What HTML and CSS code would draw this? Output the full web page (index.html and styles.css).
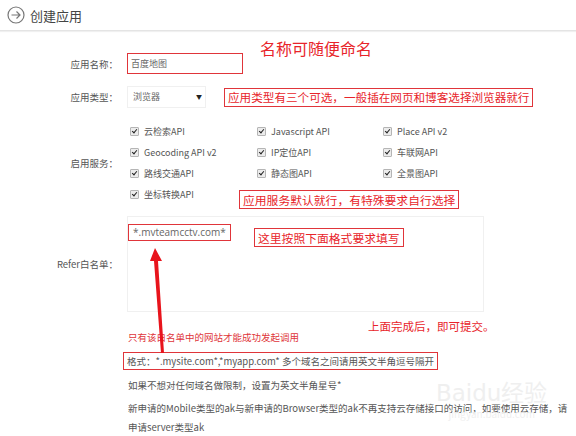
FILE: index.html
```html
<!DOCTYPE html>
<html lang="zh-CN">
<head>
  <meta charset="UTF-8">
  <title>创建应用</title>
  <link rel="stylesheet" href="styles.css">
</head>
<body>
  <!-- Header -->
  <div class="header">
    <svg class="back-icon" width="18" height="18" viewBox="0 0 18 18">
      <circle cx="9" cy="9" r="8" fill="none" stroke="#777" stroke-width="1.2"/>
      <path d="M4.5 9h8.5M9.5 5.5L13 9l-3.5 3.5" fill="none" stroke="#777" stroke-width="1.2"/>
    </svg>
    <span class="title">创建应用</span>
  </div>

  <!-- Form -->
  <div class="form">
    <div class="row row-name">
      <label>应用名称：</label>
      <div class="input red-box">百度地图</div>
    </div>

    <div class="row row-type">
      <label>应用类型：</label>
      <div class="select">浏览器<span class="caret">▼</span></div>
    </div>

    <div class="row row-services">
      <label>启用服务：</label>
      <div class="services">
        <span class="item"><i class="cb"></i>云检索API</span>
        <span class="item"><i class="cb"></i>Javascript API</span>
        <span class="item"><i class="cb"></i>Place API v2</span>
        <span class="item"><i class="cb"></i>Geocoding API v2</span>
        <span class="item"><i class="cb"></i>IP定位API</span>
        <span class="item"><i class="cb"></i>车联网API</span>
        <span class="item"><i class="cb"></i>路线交通API</span>
        <span class="item"><i class="cb"></i>静态图API</span>
        <span class="item"><i class="cb"></i>全景图API</span>
        <span class="item"><i class="cb"></i>坐标转换API</span>
      </div>
    </div>

    <div class="row row-refer">
      <label>Refer白名单：</label>
      <div class="textarea">
        <span class="refer-value">*.mvteamcctv.com*</span>
      </div>
    </div>

    <div class="notes">
      <p class="note-red">只有该白名单中的网站才能成功发起调用</p>
      <p><span class="format-box">格式：*.mysite.com*,*myapp.com* 多个域名之间请用英文半角逗号隔开</span></p>
      <p>如果不想对任何域名做限制，设置为英文半角星号*</p>
      <p>新申请的Mobile类型的ak与新申请的Browser类型的ak不再支持云存储接口的访问，如要使用云存储，请<br>申请server类型ak</p>
    </div>
  </div>

  <!-- Annotations drawn over the screenshot -->
  <div class="tip tip-name">名称可随便命名</div>
  <div class="tip boxed tip-type">应用类型有三个可选，一般插在网页和博客选择浏览器就行</div>
  <div class="tip boxed tip-services">应用服务默认就行，有特殊要求自行选择</div>
  <div class="tip boxed tip-refer">这里按照下面格式要求填写</div>
  <div class="tip tip-done">上面完成后，即可提交。</div>

  <svg class="arrow" width="30" height="120" viewBox="0 0 30 120">
    <polygon points="5,8 0,21 4,21 11,113 14,113 8,21 12,21" fill="#e8141c"/>
  </svg>

  <div class="watermark">
    <div class="wm-big">Baidu经验</div>
    <div class="wm-small">jingyan.baidu.com</div>
  </div>
</body>
</html>
```

FILE: styles.css
```css
/* Basic page styling */
body {
  font-family: "Noto Sans CJK SC", "Noto Sans", sans-serif;
  background-color: #fff;
  color: #555;
  margin: 0;
  padding: 0;
  position: relative;
  width: 576px;
  height: 436px;
  overflow: hidden;
}
.header {
  height: 30px;
  display: flex;
  align-items: center;
  padding-left: 7px;
  border-bottom: 1px solid #e4e4e4;
  box-shadow: 0 1px 1px #f0f0f0;
}
.back-icon {
  margin-right: 5px;
}
.title {
  font-size: 13px;
  color: #444;
}

/* Form rows */
.form {
  padding-top: 22px;
}
.row {
  display: grid;
  grid-template-columns: 118px 1fr;
  column-gap: 9px;
  align-items: center;
}
.row label {
  text-align: right;
  font-size: 9.5px;
  color: #555;
}
.red-box {
  border: 1px solid #e0353a;
}
.input {
  width: 111px;
  height: 19px;
  line-height: 19px;
  padding-left: 3px;
  font-size: 9px;
  color: #666;
}
.row-type {
  margin-top: 12px;
}
.select {
  width: 72px;
  height: 20px;
  line-height: 20px;
  padding-left: 5px;
  border: 1px solid #f0f0f0;
  font-size: 9px;
  color: #666;
  position: relative;
}
.caret {
  position: absolute;
  right: 3px;
  top: 0;
  font-size: 6px;
  color: #222;
}

/* Services checkboxes */
.row-services {
  margin-top: 13px;
}
.services {
  display: grid;
  grid-template-columns: 127px 126px 126px;
  grid-auto-rows: 21px;
  margin-left: 3px;
}
.item {
  display: flex;
  align-items: center;
  font-size: 9px;
  color: #555;
}
.cb {
  width: 7px;
  height: 7px;
  border: 1px solid #b5b5b5;
  border-radius: 1px;
  background: #ececec;
  margin-right: 5px;
  position: relative;
}
.cb::after {
  content: "";
  position: absolute;
  left: 2px;
  top: 0;
  width: 2px;
  height: 4px;
  border: solid #222;
  border-width: 0 1.5px 1.5px 0;
  transform: rotate(40deg);
}

/* Refer textarea */
.row-refer {
  margin-top: 11px;
}
.textarea {
  width: 355px;
  height: 94px;
  border: 1px solid #f0f0f0;
}
.refer-value {
  display: inline-block;
  margin-top: 6px;
  padding: 0 4px;
  height: 15px;
  line-height: 15px;
  border: 1px solid #e0353a;
  font-size: 10px;
  color: #666;
  font-family: "Open Sans", "Noto Sans CJK SC", sans-serif;
}

/* Notes below */
.notes {
  margin-left: 128px;
  margin-top: 15px;
  font-size: 9.5px;
  color: #555;
}
.notes p {
  margin: 0 0 4px;
  line-height: 20px;
}
.notes p + p + p + p {
  line-height: 19px;
}
.note-red {
  color: #e0353a;
}
.format-box {
  border: 1px solid #e0353a;
  padding: 1px 3px 1px 3px;
  margin-left: -5px;
}

/* Red annotations */
.tip {
  position: absolute;
  color: #e8242a;
  white-space: nowrap;
}
.boxed {
  border: 1px solid #e0353a;
  padding: 0 3px;
  height: 17px;
  line-height: 17px;
  font-size: 11.6px;
}
.tip-name {
  left: 260px;
  top: 36px;
  font-size: 16px;
}
.tip-type {
  left: 224px;
  top: 88px;
}
.tip-services {
  left: 239px;
  top: 190px;
  font-size: 11.8px;
}
.tip-refer {
  left: 254px;
  top: 228px;
  font-size: 11.8px;
}
.tip-done {
  left: 368px;
  top: 318px;
  font-size: 11.5px;
}
.arrow {
  position: absolute;
  left: 150px;
  top: 240px;
}

/* Faint watermark */
.watermark {
  position: absolute;
  left: 436px;
  top: 380px;
  color: #efefef;
  text-align: center;
}
.wm-big {
  font-size: 23px;
  line-height: 26px;
  font-family: "DejaVu Sans", sans-serif;
}
.wm-small {
  font-size: 10px;
}
```
